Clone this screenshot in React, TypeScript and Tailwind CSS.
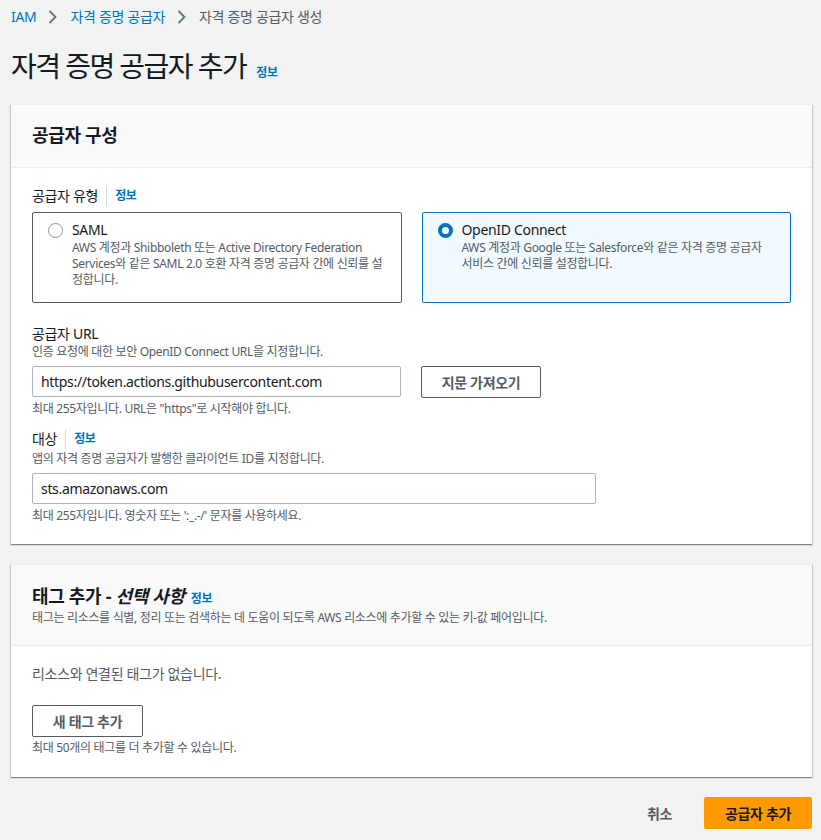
import React from "react";

const font = { fontFamily: '"Noto Sans", "Noto Sans CJK KR", sans-serif' };

function Info() {
  return <span className="text-[12px] font-bold text-[#0073bb] leading-4">정보</span>;
}

function Chevron() {
  return (
    <svg width="10" height="16" viewBox="0 0 10 16" className="mx-[12px]">
      <path d="M1.5 2 L7.5 8 L1.5 14" fill="none" stroke="#687078" strokeWidth="1.8" />
    </svg>
  );
}

function Radio({ checked }: { checked: boolean }) {
  return checked ? (
    <span className="mt-[3px] box-border h-[15px] w-[15px] shrink-0 rounded-full border-[4.5px] border-[#0073bb] bg-white" />
  ) : (
    <span className="mt-[3px] box-border h-[15px] w-[15px] shrink-0 rounded-full border border-[#879596] bg-white" />
  );
}

const cardShadow =
  "bg-white border-t border-[#eaeded] shadow-[0_1px_1px_0_rgba(0,28,36,0.3),1px_1px_1px_0_rgba(0,28,36,0.15),-1px_1px_1px_0_rgba(0,28,36,0.15)]";

export default function App() {
  return (
    <div className="min-h-[840px] bg-[#f2f3f3] pl-[11px] pr-[9px] text-[#16191f] tracking-[-0.02em]" style={font}>
      {/* breadcrumb */}
      <div className="flex items-center pt-[7px] text-[14px] leading-5">
        <span className="text-[#0073bb]">IAM</span>
        <Chevron />
        <span className="text-[#0073bb]">자격 증명 공급자</span>
        <Chevron />
        <span className="text-[#545b64]">자격 증명 공급자 생성</span>
      </div>
      {/* title */}
      <div className="mt-[21px] flex items-baseline gap-[10px]">
        <h1 className="text-[28px] leading-9 font-normal tracking-[-0.055em]">자격 증명 공급자 추가</h1>
        <Info />
      </div>

      {/* card 1 */}
      <div className={"mt-5 " + cardShadow}>
        <div className="h-[63px] bg-[#fafafa] border-b border-[#eaeded] px-[21px] pt-[18px]">
          <h2 className="text-[18px] font-bold leading-6">공급자 구성</h2>
        </div>
        <div className="px-[21px] pt-[18px] pb-[20px]">
          <div className="flex items-center text-[14px] leading-5">
            <span>공급자 유형</span>
            <span className="ml-[8px] mr-[8px] h-[20px] border-l border-[#d5dbdb]" />
            <Info />
          </div>
          <div className="mt-[6px] grid grid-cols-2 gap-[20px]">
            <div className="flex gap-[9px] rounded-[2px] border border-[#545b64] bg-white pl-[15px] pr-[10px] pt-[7px] pb-[14px]">
              <Radio checked={false} />
              <div>
                <div className="text-[14px] leading-5">SAML</div>
                <div className="whitespace-nowrap text-[12px] leading-4 text-[#545b64]">
                  <div>AWS 계정과 Shibboleth 또는 Active Directory Federation</div>
                  <div>Services와 같은 SAML 2.0 호환 자격 증명 공급자 간에 신뢰를 설</div>
                  <div>정합니다.</div>
                </div>
              </div>
            </div>
            <div className="flex gap-[9px] rounded-[2px] border border-[#0073bb] bg-[#f1faff] pl-[15px] pr-[10px] pt-[7px] pb-[14px]">
              <Radio checked={true} />
              <div>
                <div className="text-[14px] leading-5">OpenID Connect</div>
                <div className="whitespace-nowrap text-[12px] leading-4 text-[#545b64]">
                  <div>AWS 계정과 Google 또는 Salesforce와 같은 자격 증명 공급자</div>
                  <div>서비스 간에 신뢰를 설정합니다.</div>
                </div>
              </div>
            </div>
          </div>

          <div className="mt-[21px] text-[14px] leading-5">공급자 URL</div>
          <div className="text-[12px] leading-4 text-[#545b64]">인증 요청에 대한 보안 OpenID Connect URL을 지정합니다.</div>
          <div className="mt-[6px] flex gap-[20px]">
            <div className="box-border flex h-[31px] w-[369px] items-center rounded-[2px] border border-[#aab7b8] px-[8px] text-[14px]">
              https://token.actions.githubusercontent.com
            </div>
            <div className="box-border flex h-[32px] w-[120px] items-center justify-center rounded-[2px] border border-[#545b64] text-[14px] font-bold text-[#545b64]">
              지문 가져오기
            </div>
          </div>
          <div className="mt-[3px] text-[12px] leading-4 text-[#545b64]">최대 255자입니다. URL은 "https"로 시작해야 합니다.</div>

          <div className="mt-[12px] flex items-center text-[14px] leading-5">
            <span>대상</span>
            <span className="ml-[8px] mr-[8px] h-[20px] border-l border-[#d5dbdb]" />
            <Info />
          </div>
          <div className="mt-[2px] text-[12px] leading-4 text-[#545b64]">앱의 자격 증명 공급자가 발행한 클라이언트 ID를 지정합니다.</div>
          <div className="mt-[6px] box-border flex h-[31px] w-[564px] items-center rounded-[2px] border border-[#aab7b8] px-[8px] text-[14px]">
            sts.amazonaws.com
          </div>
          <div className="mt-[4px] text-[12px] leading-4 text-[#545b64]">최대 255자입니다. 영숫자 또는 ':_.-/' 문자를 사용하세요.</div>
        </div>
      </div>

      {/* card 2 */}
      <div className={"mt-5 " + cardShadow}>
        <div className="bg-[#fafafa] border-b border-[#eaeded] px-[21px] pt-[19px] pb-[19px]">
          <div className="flex items-baseline gap-[6px]">
            <h2 className="text-[18px] font-bold leading-6">
              태그 추가 - <i>선택 사항</i>
            </h2>
            <Info />
          </div>
          <div className="mt-[2px] text-[12px] leading-4 text-[#545b64]">
            태그는 리소스를 식별, 정리 또는 검색하는 데 도움이 되도록 AWS 리소스에 추가할 수 있는 키-값 페어입니다.
          </div>
        </div>
        <div className="px-[21px] pt-[18px] pb-[21px]">
          <div className="text-[14px] leading-5 text-[#545b64]">리소스와 연결된 태그가 없습니다.</div>
          <div className="mt-[21px] box-border flex h-[32px] w-[111px] items-center justify-center rounded-[2px] border border-[#545b64] text-[14px] font-bold text-[#545b64]">
            새 태그 추가
          </div>
          <div className="mt-[3px] text-[12px] leading-4 text-[#545b64]">최대 50개의 태그를 더 추가할 수 있습니다.</div>
        </div>
      </div>

      {/* footer */}
      <div className="mt-[20px] flex items-center justify-end gap-[32px] pb-[13px]">
        <span className="text-[14px] font-bold text-[#545b64]">취소</span>
        <div className="box-border flex h-[32px] w-[108px] items-center justify-center rounded-[2px] bg-[#ff9900] text-[14px] font-bold text-[#16191f]">
          공급자 추가
        </div>
      </div>
    </div>
  );
}
